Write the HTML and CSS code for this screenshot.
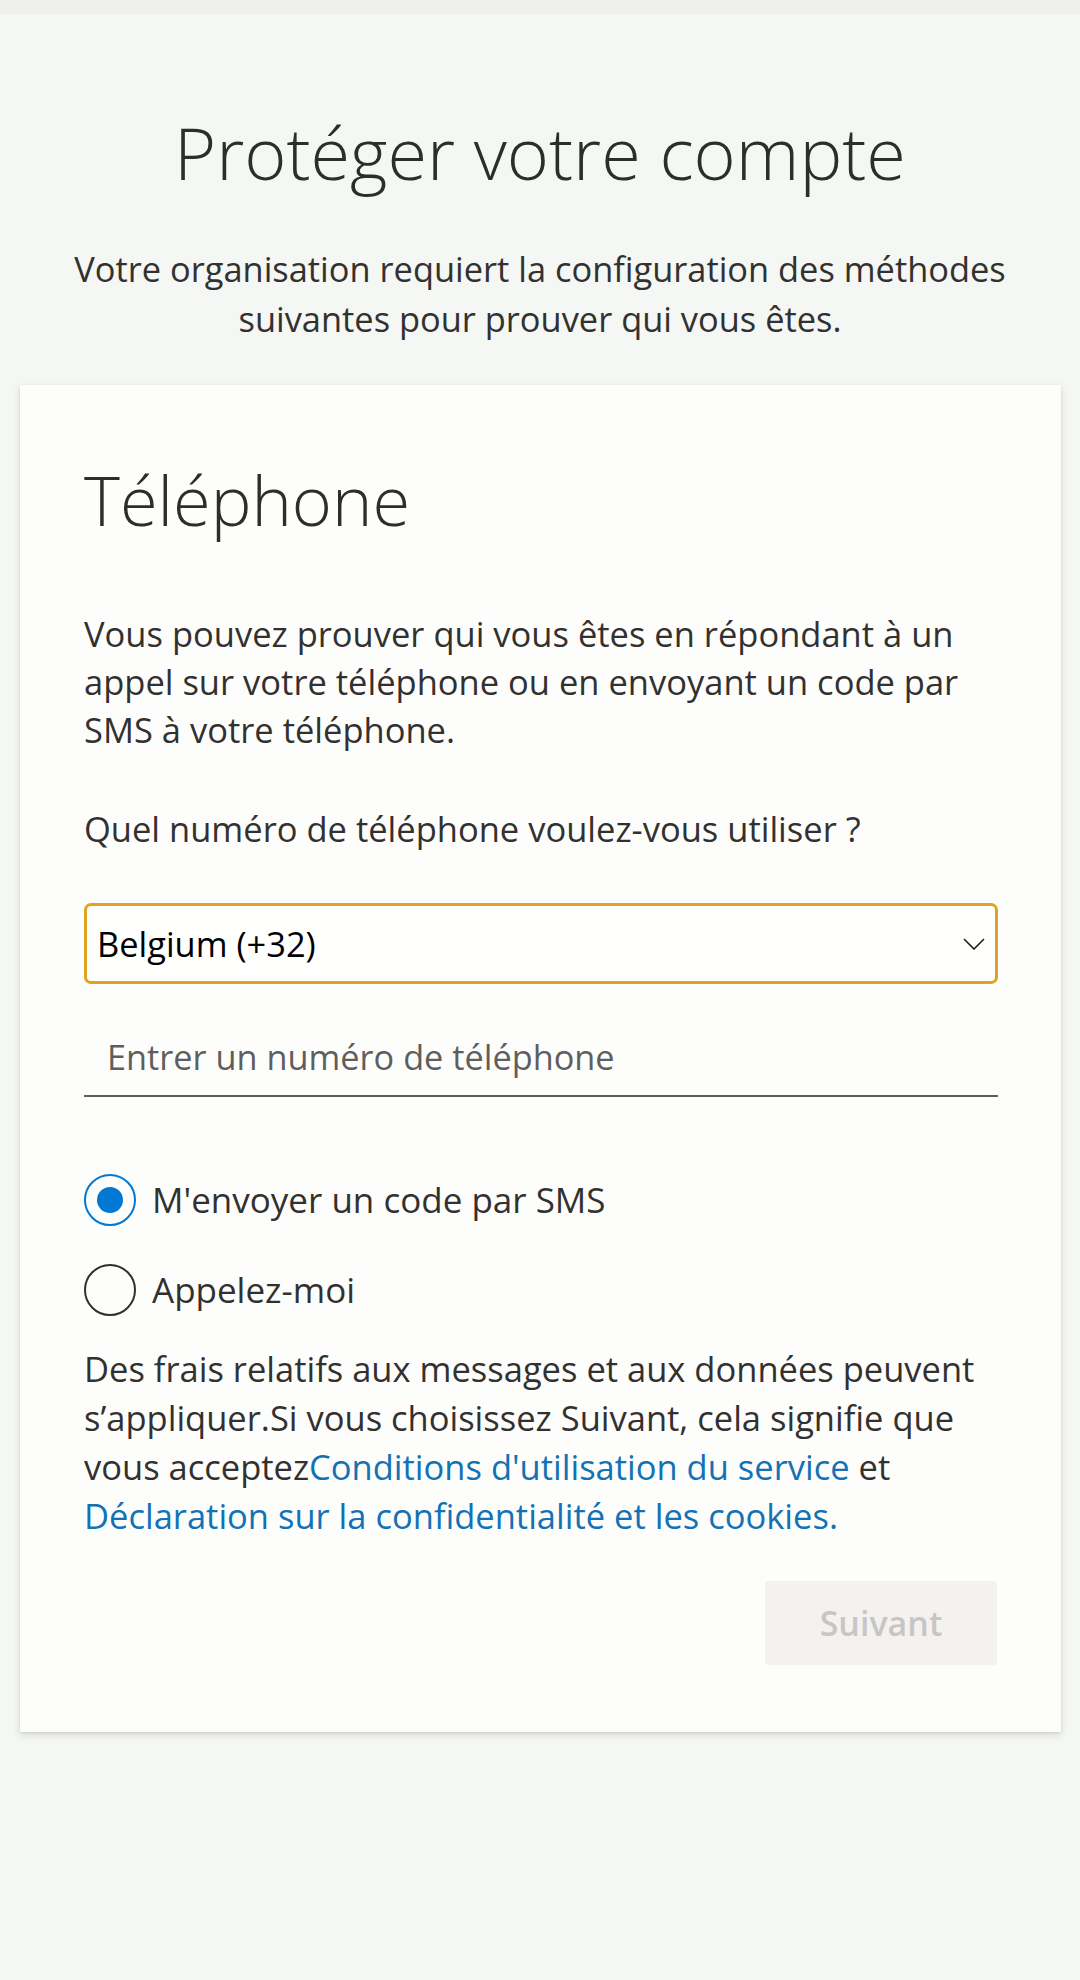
FILE: index.html
```html
<!DOCTYPE html>
<html lang="fr">
<head>
<meta charset="utf-8">
<title>Protéger votre compte</title>
<link rel="stylesheet" href="styles.css">
</head>
<body>
<div class="topbar"></div>
<header class="header">
  <h1 class="title">Protéger votre compte</h1>
  <p class="subtitle">Votre organisation requiert la configuration des méthodes suivantes pour prouver qui vous êtes.</p>
</header>
<main class="card">
  <h2 class="card-title">Téléphone</h2>
  <p class="text intro">Vous pouvez prouver qui vous êtes en répondant à un appel sur votre téléphone ou en envoyant un code par SMS à votre téléphone.</p>
  <p class="text question">Quel numéro de téléphone voulez-vous utiliser ?</p>
  <div class="select">
    <span class="select-value">Belgium (+32)</span>
    <svg class="chevron" width="22" height="12" viewBox="0 0 22 12"><path d="M1 1 L11 11 L21 1" fill="none" stroke="#201f1e" stroke-width="1.6"/></svg>
  </div>
  <input class="phone" type="text" placeholder="Entrer un numéro de téléphone">
  <div class="radios">
    <label class="radio-row">
      <span class="radio checked"><span class="dot"></span></span>
      <span class="radio-label">M'envoyer un code par SMS</span>
    </label>
    <label class="radio-row">
      <span class="radio"></span>
      <span class="radio-label">Appelez-moi</span>
    </label>
  </div>
  <p class="text disclaimer">Des frais relatifs aux messages et aux données peuvent s’appliquer.Si vous choisissez Suivant, cela signifie que vous acceptez<a class="link" href="#">Conditions d'utilisation du service</a> et <a class="link" href="#">Déclaration sur la confidentialité et les cookies.</a></p>
  <div class="actions">
    <button class="btn" type="button" disabled>Suivant</button>
  </div>
</main>
</body>
</html>
```
FILE: styles.css
```css
* { box-sizing: border-box; }
html, body {
  margin: 0;
  padding: 0;
}
body {
  background: #f4f7f3;
  font-family: "Open Sans", "Noto Sans", "Liberation Sans", sans-serif;
  color: #323130;
  width: 1080px;
  min-height: 1980px;
}
.topbar {
  height: 14px;
  background: #efefed;
}
.header {
  text-align: center;
  padding: 0 20px;
}
.title {
  margin: 96px 0 0;
  font-size: 72px;
  line-height: 84px;
  font-weight: 300;
  color: #2b2e2b;
}
.subtitle {
  margin: 50px auto 0;
  font-size: 34.4px;
  line-height: 50px;
  font-weight: 400;
}
.card {
  margin: 41px 19px 0 20px;
  background: #fdfefc;
  padding: 73px 63px 67px 64px;
  box-shadow: 0 3px 8px rgba(0, 0, 0, 0.12), 0 1px 2px rgba(0, 0, 0, 0.08);
}
.card-title {
  margin: 0;
  font-size: 68.5px;
  line-height: 84px;
  font-weight: 300;
  color: #2b2e2b;
}
.text {
  margin: 0;
  font-size: 34.5px;
  line-height: 48px;
}
.intro { margin-top: 68px; }
.question { margin-top: 51px; }
.select {
  margin-top: 50px;
  height: 81px;
  border: 3px solid #e0a321;
  border-radius: 7px;
  display: flex;
  align-items: center;
  justify-content: space-between;
  padding: 0 10px 0 10px;
  background: #fffffe;
}
.select-value {
  font-size: 34.4px;
  line-height: 48px;
  color: #000;
}
.chevron { display: block; }
.phone {
  display: block;
  width: 100%;
  margin-top: 33px;
  height: 80px;
  border: none;
  border-bottom: 2px solid #605e5c;
  background: transparent;
  padding: 0 23px;
  font-family: inherit;
  font-size: 34.3px;
  color: #323130;
  outline: none;
}
.phone::placeholder { color: #605e5c; }
.radios {
  margin-top: 77px;
  display: flex;
  flex-direction: column;
  gap: 38px;
}
.radio-row {
  display: flex;
  align-items: center;
  gap: 16px;
  height: 52px;
}
.radio {
  width: 52px;
  height: 52px;
  border-radius: 50%;
  border: 2px solid #323130;
  display: flex;
  align-items: center;
  justify-content: center;
  flex-shrink: 0;
}
.radio.checked { border-color: #0078d4; }
.dot {
  width: 26px;
  height: 26px;
  border-radius: 50%;
  background: #0078d4;
}
.radio-label {
  font-size: 35px;
  line-height: 48px;
}
.disclaimer {
  margin-top: 28px;
  line-height: 49px;
}
.link {
  color: #1272b5;
  text-decoration: none;
}
.actions {
  margin-top: 41px;
  display: flex;
  justify-content: flex-end;
}
.btn {
  width: 232px;
  height: 84px;
  border: none;
  border-radius: 3px;
  background: #f3f2f1;
  color: #c8c6c4;
  font-family: inherit;
  font-size: 34px;
  font-weight: 600;
  margin-right: 1px;
}
```
